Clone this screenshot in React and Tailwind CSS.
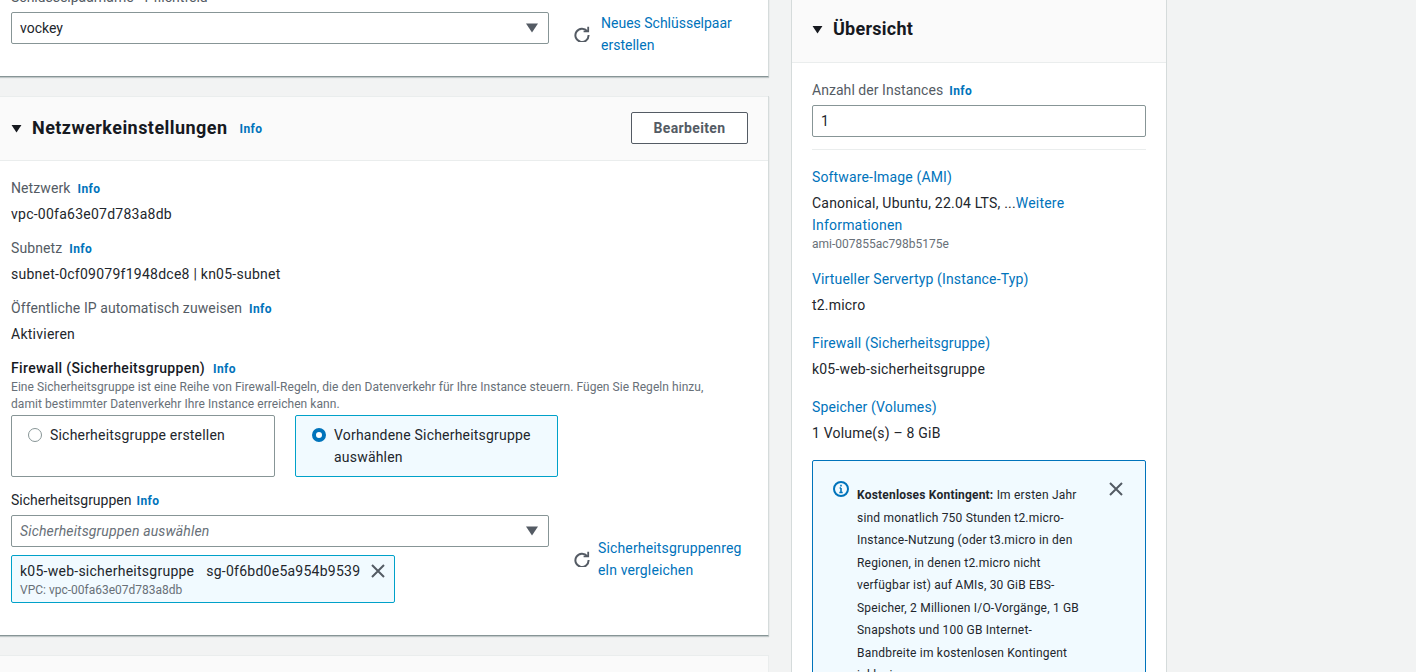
const Info = ({ className = '' }) => (
  <a className={`mt-[2px] text-xs font-bold leading-[20px] tracking-[0.4px] text-[#0073bb] ${className}`}>Info</a>
)

const Caret = ({ className = '' }) => (
  <svg viewBox="0 0 12 10" className={`h-[9px] w-[11px] fill-[#16191f] ${className}`}>
    <path d="M0.5 1h11L6 9.5z" />
  </svg>
)

const SelectArrow = () => (
  <svg viewBox="0 0 12 10" className="h-[10px] w-[12px] fill-[#545b64]">
    <path d="M0 0.5h12L6 9.5z" />
  </svg>
)

const Refresh = () => (
  <svg viewBox="0 0 16 16" className="h-[16px] w-[16px] fill-none stroke-[#545b64] stroke-2">
    <path d="M13.2 5.2A6.6 6.6 0 1 0 14.6 9" />
    <path d="M14.2 0.8v4.6H9.6" strokeWidth="1.8" />
  </svg>
)

const Close = ({ className = '' }) => (
  <svg viewBox="0 0 14 14" className={`h-[14px] w-[14px] fill-none stroke-[#545b64] stroke-2 ${className}`}>
    <path d="M1 1l12 12M13 1L1 13" />
  </svg>
)

const Field = ({ label, value }) => (
  <div className="mb-3">
    <div className="flex items-center text-sm leading-[22px] tracking-[0.1px] text-[#545b64]">
      {label}
      <Info className="ml-[7px]" />
    </div>
    <div className="mt-1 text-sm leading-[22px] tracking-[0.25px] text-[#22262c]">{value}</div>
  </div>
)

const Summary = ({ title, value }) => (
  <div className="mb-4">
    <a className="block text-sm leading-[22px] tracking-[0.15px] text-[#0073bb]">{title}</a>
    <div className="mt-1 text-sm leading-[22px] tracking-[0.2px] text-[#22262c]">{value}</div>
  </div>
)

const Select = ({ children }) => (
  <div className="flex h-8 w-[538px] items-center justify-between rounded-[2px] border border-[#879596] bg-white pl-2 pr-[10px] text-sm text-[#22262c]">
    {children}
    <SelectArrow />
  </div>
)

export default function App() {
  return (
    <div className="flex h-[672px] gap-[22px] overflow-hidden bg-[#f2f3f3] font-['Roboto','Noto_Sans',sans-serif]">
      <div className="w-[769px] shrink-0">
        <div className="-mt-[14px] h-[91px] border-r border-b border-r-[#d5dbdb] border-b-[#879596] bg-white pl-[11px] shadow-[0_1px_1px_rgba(0,28,36,0.2)]">
          <div className="text-sm leading-[22px] text-[#545b64]">Schlüsselpaarname - Pflichtfeld</div>
          <div className="mt-1 flex">
            <Select>vockey</Select>
            <div className="ml-[25px] mt-[14px]"><Refresh /></div>
            <a className="ml-[11px] w-[140px] text-sm leading-[22px] text-[#0073bb]">Neues Schlüsselpaar erstellen</a>
          </div>
        </div>

        <div className="mt-[19px] border-r border-b border-r-[#d5dbdb] border-b-[#879596] bg-white shadow-[0_1px_1px_rgba(0,28,36,0.2)]">
          <div className="flex h-[65px] items-center border-t border-b border-[#eaeded] bg-[#fafafa] pb-[1px] pl-[11px] pr-5">
            <Caret />
            <h2 className="ml-[10px] text-lg font-bold tracking-[0.45px] text-[#16191f]">Netzwerkeinstellungen</h2>
            <Info className="ml-3" />
            <button className="ml-auto h-8 w-[117px] rounded-[2px] border border-[#545b64] bg-white text-sm font-bold tracking-[0.35px] text-[#545b64]">Bearbeiten</button>
          </div>

          <div className="pb-8 pl-[11px] pt-4">
            <Field label="Netzwerk" value="vpc-00fa63e07d783a8db" />
            <Field label="Subnetz" value="subnet-0cf09079f1948dce8 | kn05-subnet" />
            <Field label="Öffentliche IP automatisch zuweisen" value="Aktivieren" />

            <div className="flex items-center text-sm font-medium leading-[22px] tracking-[0.35px] text-[#16191f]">
              Firewall (Sicherheitsgruppen)
              <Info className="ml-2" />
            </div>
            <p className="w-[720px] text-xs leading-[17px] tracking-[0.06px] text-[#687078]">
              Eine Sicherheitsgruppe ist eine Reihe von Firewall-Regeln, die den Datenverkehr für Ihre Instance steuern. Fügen Sie Regeln hinzu, damit bestimmter Datenverkehr Ihre Instance erreichen kann.
            </p>

            <div className="mt-[2px] flex gap-5">
              <div className="flex h-[62px] w-[264px] rounded-[2px] border border-[#879596] pl-4 pt-[8px]">
                <span className="mt-[4px] h-[14px] w-[14px] shrink-0 rounded-full border border-[#879596]"></span>
                <span className="ml-2 text-sm leading-[22px] tracking-[0.2px] text-[#22262c]">Sicherheitsgruppe erstellen</span>
              </div>
              <div className="flex h-[62px] w-[263px] rounded-[2px] border border-[#00a1c9] bg-[#f1faff] pl-4 pt-[8px]">
                <span className="mt-[4px] h-[14px] w-[14px] shrink-0 rounded-full border-[4px] border-[#0073bb] bg-white"></span>
                <span className="ml-2 text-sm leading-[22px] tracking-[0.2px] text-[#22262c]">Vorhandene Sicherheitsgruppe auswählen</span>
              </div>
            </div>

            <div className="mt-3 flex items-center text-sm leading-[22px] text-[#22262c]">
              Sicherheitsgruppen
              <Info className="ml-[5px]" />
            </div>

            <div className="mt-1 flex">
              <div>
                <Select><span className="italic tracking-[0.15px] text-[#687078]">Sicherheitsgruppen auswählen</span></Select>
                <div className="mt-2 flex h-12 w-[384px] justify-between rounded-[2px] border border-[#00a1c9] bg-[#f1faff] pl-2 pr-[9px] pt-[4px]">
                  <div>
                    <div className="text-sm leading-[22px] tracking-[0.25px] text-[#22262c]">k05-web-sicherheitsgruppe<span className="ml-3">sg-0f6bd0e5a954b9539</span></div>
                    <div className="text-xs leading-[17px] text-[#687078]">VPC: vpc-00fa63e07d783a8db</div>
                  </div>
                  <Close className="mt-[4px]" />
                </div>
              </div>
              <div className="ml-[25px] mt-[36px]"><Refresh /></div>
              <a className="ml-2 mt-[22px] w-[146px] break-all text-sm leading-[22px] tracking-[0.15px] text-[#0073bb]">Sicherheitsgruppenregeln vergleichen</a>
            </div>
          </div>
        </div>

        <div className="mt-[19px] h-[60px] border-t border-r border-[#eaeded] bg-[#fafafa]"></div>
      </div>

      <div className="h-[700px] w-[376px] shrink-0 border-x border-[#d5dbdb] bg-white">
        <div className="flex h-[63px] items-center border-b border-[#eaeded] bg-[#fafafa] pl-5 pb-[4px]">
          <Caret />
          <h2 className="ml-[10px] text-lg font-bold tracking-[0.25px] text-[#16191f]">Übersicht</h2>
        </div>
        <div className="px-5 pt-4">
          <div className="flex items-center text-sm leading-[22px] tracking-[0.05px] text-[#545b64]">
            Anzahl der Instances
            <Info className="ml-[6px]" />
          </div>
          <div className="mt-1 flex h-8 items-center rounded-[2px] border border-[#879596] pl-2 text-sm text-[#22262c]">1</div>
          <hr className="mt-3 border-[#eaeded]" />
          <div className="mt-4 mb-[15px]">
            <a className="block text-sm leading-[22px] tracking-[0.15px] text-[#0073bb]">Software-Image (AMI)</a>
            <div className="mt-1 text-sm leading-[22px] tracking-[0.2px] text-[#22262c]">
              Canonical, Ubuntu, 22.04 LTS, ...<a className="text-[#0073bb]">Weitere Informationen</a>
            </div>
            <div className="text-xs leading-[17px] text-[#687078]">ami-007855ac798b5175e</div>
          </div>
          <Summary title="Virtueller Servertyp (Instance-Typ)" value="t2.micro" />
          <Summary title="Firewall (Sicherheitsgruppe)" value="k05-web-sicherheitsgruppe" />
          <Summary title="Speicher (Volumes)" value="1 Volume(s) – 8 GiB" />
          <div className="relative rounded-[2px] border border-[#0073bb] bg-[#f1faff] pb-8 pl-[44px] pr-[62px] pt-[23px] text-xs leading-[22.5px] tracking-[0.2px] text-[#22262c]">
            <svg viewBox="0 0 16 16" className="absolute left-[20px] top-[20px] h-4 w-4 fill-none stroke-[#0073bb] stroke-2">
              <circle cx="8" cy="8" r="7" />
              <path d="M8 7v4.5M6.3 11.5h3.4M6.6 7h1.4" strokeWidth="1.6" />
              <path d="M7.2 4.6h1.6" strokeWidth="1.8" />
            </svg>
            <Close className="absolute right-[22px] top-[21px]" />
            <b>Kostenloses Kontingent:</b> Im ersten Jahr sind monatlich 750 Stunden t2.micro-Instance-Nutzung (oder t3.micro in den Regionen, in denen t2.micro nicht verfügbar ist) auf AMIs, 30 GiB EBS-Speicher, 2 Millionen I/O-Vorgänge, 1 GB Snapshots und 100 GB Internet-Bandbreite im kostenlosen Kontingent inklusive.
          </div>
        </div>
      </div>
    </div>
  )
}
